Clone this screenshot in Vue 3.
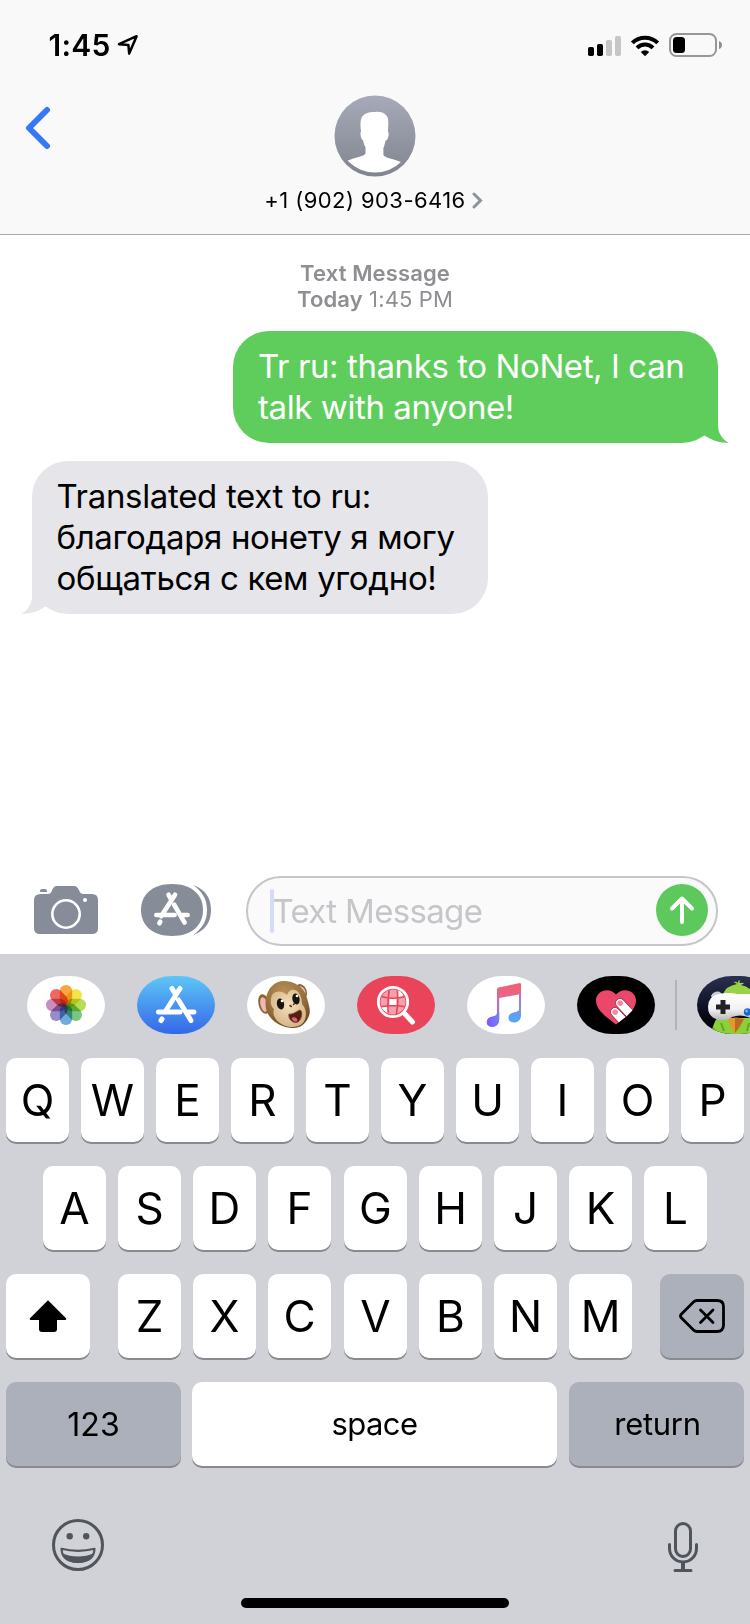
<script setup>
const row1 = 'QWERTYUIOP'.split('')
const row2 = 'ASDFGHJKL'.split('')
const row3 = 'ZXCVBNM'.split('')
const petals = [
  { color: '#f6a02c', angle: 0 },
  { color: '#f4e23a', angle: 45 },
  { color: '#b4d84a', angle: 90 },
  { color: '#6fbf7c', angle: 135 },
  { color: '#62a5dc', angle: 180 },
  { color: '#8c83c0', angle: 225 },
  { color: '#c583bb', angle: 270 },
  { color: '#ee5a50', angle: 315 }
]
</script>

<template>
  <main class="phone">
    <header class="header">
      <div class="status">
        <span class="clock">1:45</span>
        <svg class="locate" width="22" height="22" viewBox="0 0 22 22"><path d="M2 10.2 19.6 2.2 12.2 19.6 11.4 11Z" fill="none" stroke="#000" stroke-width="2.5" stroke-linejoin="round" /></svg>
        <svg class="signals" width="136" height="26" viewBox="0 0 136 26">
          <g><rect x="1" y="15" width="6" height="9" rx="1.7" /><rect x="10" y="12" width="6" height="12" rx="1.7" /><g fill="#c6c6c6"><rect x="19" y="8" width="6" height="16" rx="1.7" /><rect x="28" y="4" width="6" height="20" rx="1.7" /></g></g>
          <g fill="none" stroke="#000" stroke-width="4"><path d="M45.3 10.9a18 18 0 0 1 25.4 0" /><path d="M50 15.9a11.3 11.3 0 0 1 16 0" /></g>
          <path d="M58 24.2 53.8 20a6 6 0 0 1 8.4 0Z" />
          <rect x="83" y="2" width="46" height="22" rx="6.5" fill="none" stroke="#979797" stroke-width="2" />
          <rect x="86" y="5" width="12" height="16" rx="3.5" />
          <path d="M132 9q3 1 3 4t-3 4Z" fill="#8f8f8f" />
        </svg>
      </div>
      <div class="nav">
        <svg class="back" width="28" height="46" viewBox="0 0 28 46"><path d="M22 5 4 23 22 41" fill="none" stroke="#3478f6" stroke-width="6" stroke-linecap="round" stroke-linejoin="round" /></svg>
        <div class="contact">
          <svg class="avatar" width="82" height="82" viewBox="0 0 82 82">
            <defs>
              <linearGradient id="av" x1="0" y1="0" x2="0" y2="1"><stop offset="0" stop-color="#a7aab9" /><stop offset="1" stop-color="#80858e" /></linearGradient>
              <clipPath id="avc"><circle cx="41" cy="40" r="37.5" /></clipPath>
            </defs>
            <circle cx="41" cy="41" r="40.5" fill="url(#av)" />
            <path clip-path="url(#avc)" fill="#fff" d="M41 17c3-.6 9 .2 11.500 3.500 2.500 3.300 1.800 9 1.400 16.300 1.400.9.600 5.400-.7 7.800-.4.900-1.500.500-1.900 1.800-.6 3-1.300 5.200-1.900 6.600v6.500c0 2.200 4.500 3.300 9.500 4.800 4.500 1.400 9 3 12 5V82H9V68c4-2.500 8.500-4 13-5.300 4.500-1.400 9.500-2.500 9.500-4.500v-6c-1.300-2-2-4.500-2.300-6.800-1.500-.3-2.100-2.500-2.500-4.600-.4-2-.5-3.300.3-4.300-.8-5.500-1-11.500 1.200-15 2.800-3.700 8-4.900 12.800-4.500Z" />
          </svg>
          <div class="number"><span>+1 (902) 903-6416</span><svg width="11" height="17" viewBox="0 0 11 17"><path d="M2 2l6.500 6.500L2 15" fill="none" stroke="#8e949d" stroke-width="3" stroke-linecap="round" /></svg></div>
        </div>
      </div>
    </header>

    <section class="chat">
      <div class="stamp"><div><b>Text Message</b></div><div><b>Today</b> 1:45 PM</div></div>
      <div class="bubble sent">
        <div>Tr ru: thanks to NoNet, I can</div><div>talk with anyone!</div>
        <svg class="tail" width="30" height="34" viewBox="0 0 30 34"><path d="M0 0H19V16C19 24 23 30 30 34 20 34 12 31 5.500 26.500L0 28Z" fill="#5fcd5c" /></svg>
      </div>
      <div class="bubble received">
        <div>Translated text to ru:</div><div>благодаря нонету я могу</div><div>общаться с кем угодно!</div>
        <svg class="tail" width="30" height="34" viewBox="0 0 30 34"><path d="M30 0H11V16C11 24 7 30 0 34 10 34 18 31 24.500 26.500L30 28Z" fill="#e5e5ea" /></svg>
      </div>
    </section>

    <section class="compose">
      <svg class="camera" width="64" height="48" viewBox="0 0 64 48">
        <path fill="#868c98" d="M6.500 8H14c2 0 2.800-.7 3.700-2.700C19 2 20 0 23.500 0h16C43 0 44 2 45.500 5.300 46.400 7.300 47.300 8 49.300 8H58q6 0 6 6v28q0 6-6 6H6q-6 0-6-6V14q0-6 6.500-6Z" />
        <path d="M6 6V4.800Q6 3 8 3h3q2 0 2 1.800V6Z" fill="#868c98" />
        <circle cx="32" cy="28" r="13.700" fill="none" stroke="#fff" stroke-width="2.600" /><circle cx="51" cy="14" r="2" fill="#fff" />
      </svg>
      <svg class="apps" width="70" height="52" viewBox="0 0 70 52">
        <path d="M31 0c20 0 31 11 31 26S51 52 31 52 0 41 0 26 11 0 31 0Z" fill="#868c98" />
        <path d="M52 1C64 5 70 14 70 26S64 47 52 51C61 45 66 37 66 26S61 7 52 1Z" fill="#868c98" />
        <g transform="translate(31 26) scale(.87)" stroke="#fff" stroke-linecap="round" stroke-width="5.300"><path d="M-4-17.500-.8-12M3.500-17.500-12.500 7.300M-18 5.800H3M11.500 5.800H18M2.500-6 14.500 14.500M-13.500 13.500l-1 1.700" /></g>
      </svg>
      <div class="field">
        <i class="caret"></i><span class="placeholder">Text Message</span>
        <svg class="send" width="52" height="52" viewBox="0 0 52 52"><circle cx="26" cy="26" r="26" fill="#5dc85b" /><path d="M26 38V14.500M16 24.500l10-10 10 10" fill="none" stroke="#fff" stroke-width="4" stroke-linecap="round" stroke-linejoin="round" /></svg>
      </div>
    </section>

    <section class="keyboard">
      <div class="drawer">
        <div class="app white">
          <svg width="78" height="58" viewBox="-39 -29 78 58"><g class="flower"><rect v-for="p in petals" :key="p.angle" x="-6.200" y="-20" width="12.400" height="20" rx="6.200" :fill="p.color" :transform="`rotate(${p.angle})`" /></g></svg>
        </div>
        <div class="app store">
          <svg width="78" height="58" viewBox="-39 -29 78 58"><g stroke="#fff" stroke-linecap="round" stroke-width="5"><path d="M-4-16.500-1-11.500M4-16.500-11 7M-17.500 7H4M12 7H18M2.500-5 15 15.500M-14 14l-1 1.500" /></g></svg>
        </div>
        <div class="app white">
          <svg width="78" height="58" viewBox="0 0 78 58">
            <defs><radialGradient id="fur" cx=".42" cy=".25" r=".75"><stop offset="0" stop-color="#b98f55" /><stop offset=".7" stop-color="#8f6a38" /><stop offset="1" stop-color="#6d4b22" /></radialGradient>
            <radialGradient id="face" cx=".5" cy=".4" r=".65"><stop offset="0" stop-color="#f3dfba" /><stop offset="1" stop-color="#d3b283" /></radialGradient></defs>
            <ellipse cx="17" cy="28" rx="5.500" ry="10" transform="rotate(-14 17 28)" fill="#8a6434" /><ellipse cx="17" cy="28.500" rx="3.500" ry="7.500" transform="rotate(-14 17 28.500)" fill="#f0b9b4" />
            <ellipse cx="54.500" cy="15" rx="5" ry="7.500" transform="rotate(-28 54.500 15)" fill="#8a6434" /><ellipse cx="55" cy="15" rx="3" ry="5" transform="rotate(-28 55 15)" fill="#f0b9b4" />
            <path d="M36 5C48 5 57 11 60 22s4 14 1 20-7 10-15 10c-9 0-20-5-25-14C15 27 20 6 36 5Z" fill="url(#fur)" />
            <path d="M25 19c4-5 11-4 15 0 2-6 8-7 12-2 2 4 3 7 3 11 5 5 5 14 1 19-4 5-14 5-20 2-8-4-11-11-9-16-4-3-4-9-2-14Z" fill="url(#face)" />
            <ellipse cx="33.500" cy="28" rx="3.600" ry="5.500" transform="rotate(-12 33.500 28)" fill="#171412" /><ellipse cx="49" cy="23" rx="3.600" ry="5.500" transform="rotate(-12 49 23)" fill="#171412" /><circle cx="35" cy="25" r="1.300" fill="#fff" /><circle cx="50" cy="20" r="1.300" fill="#fff" />
            <path d="m43 29.500 1.300 1M46.500 28.500l.8-.8" stroke="#5b3920" stroke-width="1.600" stroke-linecap="round" />
            <path d="M42 38c4 1 8-3 11-4 3 1 2 9-2 12-5 2-10-3-9-8Z" fill="#551c18" stroke="#7b4b2c" /><path d="M44.500 42c3-2 6 0 6 3-2 2-5 0-6-3Z" fill="#e0626c" />
          </svg>
        </div>
        <div class="app search">
          <svg width="78" height="58" viewBox="0 0 78 58">
            <defs><clipPath id="lens"><circle cx="36" cy="26" r="12.500" /></clipPath></defs>
            <g clip-path="url(#lens)"><path fill="#f4a0ad" d="M22 12h30v30H22Z" /><path fill="#fff" d="M32.500 23h7v6.500h-7ZM40 12h6v10h-5ZM24 31h8v8h-6Z" /><path d="M24 20.500Q36 24 48 20.500M22 31Q36 28.500 50 31M32.500 12Q30 26 31.500 40M40 12Q42 26 39 40" fill="none" stroke="#ea445a" stroke-width="1.700" /></g>
            <circle cx="36" cy="26" r="14.700" fill="none" stroke="#fff" stroke-width="2.800" /><path d="m48 38 7.500 8" stroke="#fff" stroke-width="5" stroke-linecap="round" />
          </svg>
        </div>
        <div class="app white">
          <svg width="78" height="58" viewBox="0 0 78 58">
            <defs><linearGradient id="mus" gradientUnits="userSpaceOnUse" x1="0" y1="7" x2="0" y2="50"><stop offset="0" stop-color="#f0606a" /><stop offset=".3" stop-color="#e5668c" /><stop offset=".6" stop-color="#a274e0" /><stop offset="1" stop-color="#8a5cfa" /></linearGradient>
            <linearGradient id="mus2" gradientUnits="userSpaceOnUse" x1="0" y1="12" x2="0" y2="42"><stop offset="0" stop-color="#e5668c" /><stop offset=".45" stop-color="#9a80dc" /><stop offset="1" stop-color="#55a5f5" /></linearGradient>
            <linearGradient id="mus3" x1="0" y1="0" x2="1" y2="0"><stop offset="0" stop-color="#8b53ff" /><stop offset="1" stop-color="#6d86f5" /></linearGradient></defs>
            <path fill="url(#mus)" d="M30 13.500q0-1.500 1.500-1.900L52 7.200q2-.4 2 1.300V18L32.200 22V43c0 5-3 7.800-6.800 7.800-3.500 0-5.600-2-5.600-4.600 0-3 2-4.700 5.200-5.400 3.700-.8 5-1.500 5-4Z" />
            <path fill="url(#mus2)" d="M54 15V39c0 5-3 7.500-7 7.500-3.500 0-5.500-2-5.500-4.700 0-3 2-4.600 5-5.300 4-1 5.500-1 5.500-3.500V18Z" />
            <path fill="url(#mus3)" d="M30 36.800c0 2.500-1.300 3.200-5 4-3.200.7-5.200 2.400-5.200 5.400 0 2.600 2.100 4.600 5.600 4.600 3.800 0 6.800-2.800 6.800-7.800v-6.200Z" />
          </svg>
        </div>
        <div class="app black">
          <svg width="78" height="58" viewBox="0 0 78 58">
            <defs><clipPath id="ht"><path d="M39 48.500C28 40 19 34 19 24c0-9 13-14 20-5.500C46 10 59 15 59 24c0 10-9 16-20 24.500Z" /></clipPath></defs>
            <g clip-path="url(#ht)"><path fill="#eb4869" d="M15 10h50v45H15Z" /><g transform="translate(43 27) rotate(-43)"><rect x="-4.500" y="-4.500" width="9" height="40" rx="4.500" fill="#fff" stroke="#9b2540" stroke-width=".8" /><circle cy=".2" r="2.800" fill="#f28ba0" /></g><g transform="translate(38 36) rotate(-43)"><rect x="-4.500" y="-4.500" width="9" height="40" rx="4.500" fill="#fff" stroke="#9b2540" stroke-width=".8" /><circle cy=".2" r="2.800" fill="#f28ba0" /></g></g>
          </svg>
        </div>
        <i class="divider"></i>
        <div class="app game">
          <svg width="78" height="58" viewBox="0 0 78 58">
            <defs><linearGradient id="pad" x1="0" y1="0" x2="0" y2="1"><stop offset="0" stop-color="#fff" /><stop offset=".6" stop-color="#f1f1f3" /><stop offset="1" stop-color="#b5b6ba" /></linearGradient></defs>
            <path d="M14 58q2-10 6-16h40l8 16Z" fill="#8bcf3a" /><path d="M16 52l4 6M24 47l3 8M52 47l-2 8" stroke="#64a524" stroke-width="2" />
            <path d="M26 18q3-8 14-10-3-2-4-2 4-1 5 1 0-3 2-3-1 2 0 3 3-1 4 1-2 0-3 1 9 2 14 9Z" fill="#97d345" />
            <path d="M14 20q2-5 8-4.500l4 3-10 5Z" fill="#c9cbd2" />
            <path d="M22 18q10-2 18 0h22q12 2 12 14t-12 12q-6 0-11-3-8-3-16 0-5 4-12 3Q11 42 11 31T22 18Z" fill="url(#pad)" />
            <path d="M31 43q8-3 16 0-4 8-9 14-5-6-7-14Z" fill="#e6982f" /><path d="M38 42q4 0 9 1-4 8-9 14Z" fill="#b86c20" />
            <path d="M26 24v14M19 31h14" stroke="#222" stroke-width="5" /><circle cx="50.500" cy="36" r="3.700" fill="#1c62d8" /><circle cx="49.500" cy="35" r="1.400" fill="#72b3ff" />
          </svg>
        </div>
      </div>

      <div class="keys r1"><div v-for="k in row1" :key="k" class="key">{{ k }}</div></div>
      <div class="keys r2"><div v-for="k in row2" :key="k" class="key">{{ k }}</div></div>
      <div class="keys r3">
        <div class="key side"><svg width="38" height="34" viewBox="0 0 38 34"><path d="M19 1.200 37 19.300q1 1.700-.8 1.700H28v9q0 3-3 3H13q-3 0-3-3v-9H1.800Q0 21 1 19.300Z" /></svg></div>
        <div class="letters"><div v-for="k in row3" :key="k" class="key">{{ k }}</div></div>
        <div class="key side dark"><svg width="46" height="34" viewBox="0 0 46 34"><g fill="none" stroke="#000" stroke-width="2.800" stroke-linecap="round" stroke-linejoin="round"><path d="M18 1.500H38q6.500 0 6.500 6V26q0 6.500-6.500 6.500H18q-2 0-3.500-1.500L2 18.500q-1-1.500 0-3L14.500 3Q16 1.500 18 1.500Z" /><path d="M21.500 11 34 23.500M34 11 21.500 23.500" /></g></svg></div>
      </div>
      <div class="keys r4"><div class="key wide dark numeric">123</div><div class="key space">space</div><div class="key wide dark return">return</div></div>

      <div class="tools">
        <svg width="52" height="52" viewBox="0 0 52 52"><circle cx="26" cy="26" r="24.500" fill="none" stroke="#50555c" stroke-width="3" /><circle cx="17.700" cy="17.300" r="3.200" fill="#50555c" /><circle cx="34.200" cy="17.300" r="3.200" fill="#50555c" /><path d="M9.500 29.800q16.500 4 33 0Q42 43 26 43T9.500 29.800Z" fill="none" stroke="#50555c" stroke-width="2.200" stroke-linejoin="round" /><path d="M11 34.500Q17 37.500 26 37.500T41 34.500Q37 44 26 44T11 34.500Z" fill="#50555c" /></svg>
        <svg class="mic" width="30" height="50" viewBox="0 0 30 50"><g fill="none" stroke="#50555c" stroke-width="3" stroke-linecap="round"><rect x="7.500" y="1.500" width="15" height="33" rx="7.500" /><path d="M1.500 22.500v4a13.500 13.500 0 0 0 27 0v-4M7 48.500H23" /><path d="M15 41v7" stroke-width="4" stroke-linecap="butt" /></g></svg>
      </div>
      <div class="home"></div>
    </section>
  </main>
</template>

<style>
html, body { margin: 0; background: #fff; }
</style>

<style scoped>
.phone { width: 750px; height: 1624px; display: flex; flex-direction: column; overflow: hidden; background: #fff; color: #000; font-family: Inter, "Noto Sans", "Liberation Sans", sans-serif; font-kerning: normal; }
.phone * { box-sizing: border-box; }
svg { display: block; flex: none; }
.header { height: 235px; flex: none; background: #f9f9f9; border-bottom: 1px solid #a9a9ac; }
.status { height: 96px; display: flex; align-items: flex-start; padding: 32px 27px 0 48.5px; }
.clock { width: 61.5px; font-size: 30px; font-weight: 600; line-height: 27px; letter-spacing: .25px; }
.locate { margin: 2px 0 0 7px; }
.signals { margin-left: auto; }
.nav { display: grid; grid-template-columns: 250px 250px 250px; }
.back { margin: 9px 0 0 25px; }
.contact { display: flex; flex-direction: column; align-items: center; }
.avatar { margin-top: -1px; }
.number { height: 30px; margin: 8px 3px 0 0; display: flex; align-items: center; gap: 6px; font-size: 22px; line-height: 30px; letter-spacing: .42px; white-space: nowrap; }
.chat { height: 630px; flex: none; padding: 25px 32px 0; display: flex; flex-direction: column; align-items: flex-start; }
.stamp { width: 100%; height: 71px; text-align: center; color: #8e8e93; font-size: 22px; line-height: 26px; letter-spacing: .12px; }
.stamp b { font-weight: 600; }
.bubble { position: relative; font-size: 33px; line-height: 41px; border-radius: 36px; padding: 15px 24px 0; white-space: nowrap; }
.sent { width: 485px; height: 112px; padding-left: 25px; align-self: flex-end; background: #5fcd5c; color: #fff; letter-spacing: -.41px; }
.received { width: 456px; height: 153px; padding-left: 24.5px; margin-top: 18px; background: #e5e5ea; letter-spacing: -.33px; }
.tail { position: absolute; bottom: 0; }
.sent .tail { right: -11px; }
.received .tail { left: -11px; }
.compose { height: 89px; flex: none; display: flex; padding: 11px 32px 0 34px; }
.camera { margin-top: 10px; }
.apps { margin: 8px 0 0 43px; }
.field { width: 472px; height: 70px; margin-left: 35px; border: 2px solid #c5c5ca; border-radius: 35px; background: #fafafa; display: flex; align-items: center; padding: 0 8px 0 22px; }
.caret { width: 4px; height: 44px; border-radius: 2px; background: #d3dbf6; }
.placeholder { margin-left: -1.5px; font-size: 33px; letter-spacing: -.68px; color: #c5c5ca; }
.send { margin: -2px 0 0 auto; }
.keyboard { height: 670px; flex: none; background: #d1d2d8; }
.drawer { height: 104px; padding: 22px 0 0 26.7px; display: flex; gap: 32px; overflow: hidden; }
.app { width: 78px; height: 58px; flex: none; border-radius: 35px / 29px; overflow: hidden; }
.white { background: #fff; }
.store { background: linear-gradient(#5ec6f7, #3567e8); }
.search { background: #ea445a; }
.black { background: #000; }
.game { background: linear-gradient(#2a3050, #05060f 75%); margin-left: -12px; }
.divider { width: 2px; height: 50px; flex: none; margin: 4px 0 0 -12px; background: #b1b3b8; }
.flower rect { mix-blend-mode: multiply; opacity: .92; }
.keys { height: 108px; display: flex; gap: 12px; padding: 0 6px; }
.key { width: 63px; height: 84px; flex: none; display: flex; align-items: center; justify-content: center; border-radius: 10px; background: #fff; box-shadow: 0 2px 0 #898a8d; font-size: 44px; line-height: 84px; }
.r2 { padding-left: 43px; }
.r2 .key:nth-child(5), .letters .key:nth-child(4) { margin-left: 1px; }
.r3 { gap: 0; justify-content: space-between; }
.letters { display: flex; gap: 12px; }
.side { width: 84px; }
.dark { background: #abb0bb; }
.r4 { gap: 0; }
.wide { width: 175px; font-size: 32px; }
.numeric { padding-top: 2px; }
.space { width: 365px; margin: 0 12px 0 11px; font-size: 31px; letter-spacing: -.6px; }
.return { font-size: 31px; letter-spacing: -.3px; padding-left: 2px; }
.tools { height: 80px; margin-top: 27px; padding: 2px 52px 0; display: flex; justify-content: space-between; }
.mic { margin-top: 3px; }
.home { width: 268px; height: 10px; margin: 1px auto 0; border-radius: 5px; background: #000; }
</style>
